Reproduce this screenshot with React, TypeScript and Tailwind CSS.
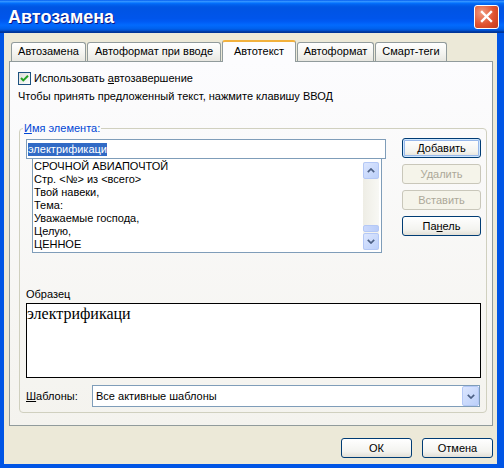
import React from "react";

function U({ children }: { children: React.ReactNode }) {
  return <span className="underline underline-offset-[1px] decoration-[1px]">{children}</span>;
}

function XPButton({
  children,
  disabled,
  isDefault,
  w,
}: {
  children: React.ReactNode;
  disabled?: boolean;
  isDefault?: boolean;
  w: string;
}) {
  if (disabled) {
    return (
      <div
        className={
          w +
          " h-[20px] rounded-[3px] border border-[#C9C7BA] bg-[#F5F4EA] text-[#ACA899] flex items-center justify-center leading-[13px]"
        }
      >
        {children}
      </div>
    );
  }
  return (
    <div
      className={
        w +
        (isDefault
          ? " h-[20px] rounded-[3px] border border-[#003C74] bg-[linear-gradient(to_bottom,#FFFFFF,#F3F3EF_70%,#E2DFD6)] shadow-[inset_0_0_0_1px_#CEE7FF,inset_0_0_0_2px_#98B8EA] text-black flex items-center justify-center leading-[13px]"
          : " h-[20px] rounded-[3px] border border-[#003C74] bg-[linear-gradient(to_bottom,#FFFFFF,#F3F3EF_70%,#E2DFD6)] text-black flex items-center justify-center leading-[13px]")
      }
    >
      {children}
    </div>
  );
}

function ChevUp() {
  return (
    <svg width="8" height="5" viewBox="0 0 8 5">
      <path d="M0.8 4.2 L4 1 L7.2 4.2" stroke="#4D6185" strokeWidth="1.7" fill="none" />
    </svg>
  );
}
function ChevDown() {
  return (
    <svg width="8" height="5" viewBox="0 0 8 5">
      <path d="M0.8 0.8 L4 4 L7.2 0.8" stroke="#4D6185" strokeWidth="1.7" fill="none" />
    </svg>
  );
}

const listItems = [
  "СРОЧНОЙ АВИАПОЧТОЙ",
  "Стр. <№> из <всего>",
  "Твой навеки,",
  "Тема:",
  "Уважаемые господа,",
  "Целую,",
  "ЦЕННОЕ",
];

export default function App() {
  return (
    <div className="w-[504px] h-[468px] flex flex-col bg-[#0055E5] font-['Liberation_Sans',Arial,sans-serif] text-[11px] text-black overflow-hidden select-none">
      {/* Title bar */}
      <div className="h-[33px] shrink-0 flex items-center pl-[8px] pr-[5px] bg-[linear-gradient(to_bottom,#0058EE_0%,#3593FF_4%,#288EFF_6%,#127DFF_8%,#036FFC_10%,#0262EE_14%,#0057E5_20%,#0054E3_24%,#0055EB_56%,#005BF5_66%,#026AFE_76%,#0062EF_86%,#0052D6_92%,#0040AB_94%,#003092_100%)]">
        <div className="text-white font-bold text-[18px] leading-[22px] mt-[1px] [text-shadow:1px_1px_0_#0A1883]">
          Автозамена
        </div>
        <div className="ml-auto w-[25px] h-[24px] rounded-[3px] border border-white bg-[radial-gradient(circle_at_30%_30%,#F09B7F,#E0522F_55%,#C2391B)] flex items-center justify-center">
          <svg width="13" height="13" viewBox="0 0 13 13">
            <path d="M2 2 L11 11 M11 2 L2 11" stroke="white" strokeWidth="2.4" strokeLinecap="square" />
          </svg>
        </div>
      </div>

      {/* Body */}
      <div className="flex-1 ml-[4px] mr-[7px] mb-[4px] bg-[#ECE9D8] pl-[5px] pr-[4px] pt-[7px]">
        {/* Tabs */}
        <div className="relative z-10 h-[21px] flex items-end pl-[2px] gap-[1px]">
          <div className="w-[75px] h-[19px] rounded-t-[3px] border border-b-0 border-[#919B9C] bg-[linear-gradient(to_bottom,#FFFFFF,#F3F3EF_60%,#E8E7E1)] flex items-start justify-center pt-[2px] leading-[13px]">
            Автозамена
          </div>
          <div className="w-[134px] h-[19px] rounded-t-[3px] border border-b-0 border-[#919B9C] bg-[linear-gradient(to_bottom,#FFFFFF,#F3F3EF_60%,#E8E7E1)] flex items-start justify-center pt-[2px] leading-[13px]">
            Автоформат при вводе
          </div>
          <div className="w-[74px] h-[22px] mb-[-1px] rounded-t-[3px] border border-b-0 border-[#919B9C] border-t-2 border-t-[#F2B13D] bg-[#FCFCFE] flex items-start justify-center pt-[3px] leading-[13px]">
            Автотекст
          </div>
          <div className="w-[77px] h-[19px] rounded-t-[3px] border border-b-0 border-[#919B9C] bg-[linear-gradient(to_bottom,#FFFFFF,#F3F3EF_60%,#E8E7E1)] flex items-start justify-center pt-[2px] leading-[13px]">
            Автоформат
          </div>
          <div className="w-[72px] h-[19px] rounded-t-[3px] border border-b-0 border-[#919B9C] bg-[linear-gradient(to_bottom,#FFFFFF,#F3F3EF_60%,#E8E7E1)] flex items-start justify-center pt-[2px] leading-[13px]">
            Смарт-теги
          </div>
        </div>

        {/* Panel */}
        <div className="h-[365px] border border-[#919B9C] bg-[linear-gradient(to_bottom,#FCFCFE,#F4F3EE)] pl-[8px] pt-[10px]">
          <div className="flex items-center h-[13px] gap-[3px]">
            <div className="w-[13px] h-[13px] border border-[#1C5180] bg-[linear-gradient(135deg,#DCDCD7,#FFFFFF)] flex items-center justify-center">
              <svg width="11" height="11" viewBox="0 0 11 11">
                <path d="M2 5 L4.3 7.4 L9 2.8" stroke="#21A121" strokeWidth="2" fill="none" />
              </svg>
            </div>
            <div className="leading-[13px]">
              Использовать <U>а</U>втозавершение
            </div>
          </div>
          <div className="mt-[4px] leading-[14px]">
            Чтобы принять предложенный текст, нажмите клавишу ВВОД
          </div>

          <fieldset className="mt-[19px] ml-[1px] w-[467px] border border-[#D0D0BF] rounded-[4px]">
            <legend className="ml-[3px] px-[1px] leading-[13px] text-[#0046D5]">
              <U>И</U>мя элемента:
            </legend>
            <div className="pl-[6px] pr-[5px] pt-[3px] pb-[5px]">
              <div className="flex items-start">
                <div className="w-[360px] mt-[1px]">
                  <div className="h-[20px] border border-[#7F9DB9] bg-white flex items-center px-[1px]">
                    <span className="bg-[#316AC5] text-white leading-[13px]">электрификаци</span>
                  </div>
                  <div className="ml-[6px] w-[350px] h-[94px] border border-t-0 border-[#7F9DB9] bg-white flex">
                    <div className="flex-1 pl-[1px] pt-[1px] overflow-hidden">
                      {listItems.map((t) => (
                        <div key={t} className="leading-[13px] whitespace-nowrap">
                          {t}
                        </div>
                      ))}
                    </div>
                    <div className="w-[16px] mt-[3px] mb-[2px] mr-[2px] flex flex-col bg-[#F4F3EE]">
                      <div className="h-[17px] rounded-[2px] border border-[#B4C8F6] bg-[linear-gradient(135deg,#DCE6FE,#BCD0FA)] flex items-center justify-center">
                        <ChevUp />
                      </div>
                      <div className="h-[46px] bg-[linear-gradient(to_right,#EEEDE5,#F8F8F4)]" />
                      <div className="h-[7px] rounded-[2px] border border-[#B4C8F6] bg-[linear-gradient(to_right,#CBD9FC,#B9CDF9)]" />
                      <div className="h-[1px]" />
                      <div className="h-[17px] rounded-[2px] border border-[#B4C8F6] bg-[linear-gradient(135deg,#DCE6FE,#BCD0FA)] flex items-center justify-center">
                        <ChevDown />
                      </div>
                    </div>
                  </div>
                </div>
                <div className="ml-auto w-[79px] flex flex-col gap-[6px]">
                  <XPButton w="w-[79px]" isDefault>
                    <span>
                      <U>Д</U>обавить
                    </span>
                  </XPButton>
                  <XPButton w="w-[79px]" disabled>
                    Удалить
                  </XPButton>
                  <XPButton w="w-[79px]" disabled>
                    Вставить
                  </XPButton>
                  <XPButton w="w-[79px]">
                    <span>
                      Па<U>н</U>ель
                    </span>
                  </XPButton>
                </div>
              </div>

              <div className="mt-[35px] leading-[13px]">Образец</div>
              <div className="mt-[2px] w-[455px] h-[75px] border border-black bg-white pt-[1px] font-['Liberation_Serif','Times_New_Roman',serif] text-[16px] leading-[18px]">
                электрификаци
              </div>

              <div className="mt-[7px] flex items-center h-[22px]">
                <div className="w-[66px] leading-[13px]">
                  <U>Ш</U>аблоны:
                </div>
                <div className="w-[388px] h-[22px] border border-[#7F9DB9] bg-white flex items-center">
                  <div className="flex-1 pl-[3px] leading-[13px]">Все активные шаблоны</div>
                  <div className="w-[17px] h-full rounded-[2px] border border-[#B4C8F6] bg-[linear-gradient(135deg,#DCE6FE,#BCD0FA)] flex items-center justify-center">
                    <ChevDown />
                  </div>
                </div>
              </div>
            </div>
          </fieldset>
        </div>

        {/* Bottom buttons */}
        <div className="mt-[12px] flex justify-end gap-[10px]">
          <XPButton w="w-[71px]">ОК</XPButton>
          <XPButton w="w-[71px]">Отмена</XPButton>
        </div>
      </div>
    </div>
  );
}
